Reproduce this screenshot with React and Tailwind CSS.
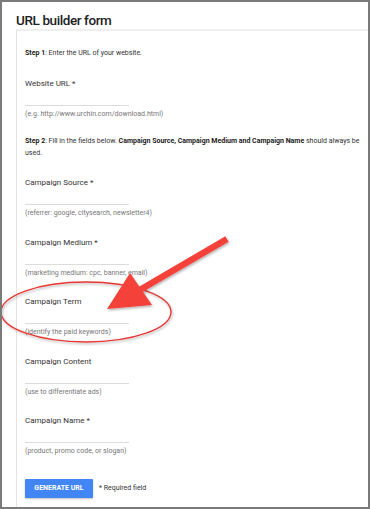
const fields = [
  { label: 'Campaign Source', required: true, hint: '(referrer: google, citysearch, newsletter4)' },
  { label: 'Campaign Medium', required: true, hint: '(marketing medium: cpc, banner, email)' },
  { label: 'Campaign Term', required: false, hint: '(identify the paid keywords)' },
  { label: 'Campaign Content', required: false, hint: '(use to differentiate ads)' },
  { label: 'Campaign Name', required: true, hint: '(product, promo code, or slogan)' },
]

function Field({ label, required, hint, last }) {
  return (
    <div className={last ? '' : 'mb-[18.5px]'}>
      <div className="text-[8px] leading-[12px] text-[#333]">
        {label}
        {required && ' *'}
      </div>
      <div className="w-[104px] h-[16px] border-b border-[#dcdcdc]" />
      <div className="mt-[3px] text-[7px] leading-[10px] text-[#777]">{hint}</div>
    </div>
  )
}

export default function App() {
  return (
    <div
      className="relative w-[370px] h-[509px] overflow-hidden bg-white border-2 border-[#7a7a7a] flex flex-col"
      style={{ fontFamily: 'Roboto, "Noto Sans", sans-serif' }}
    >
      {/* Title */}
      <h1 className="pl-[14px] pt-[10px] text-[13.5px] leading-[16px] tracking-[-0.4px] text-[#222] font-medium">
        URL builder form
      </h1>

      {/* Form card */}
      <div className="ml-[14px] mt-[1px] flex-1 border-t-2 border-l border-t-[#efefef] border-l-[#e4e4e4] pl-2 pt-[17px]">
        <p className="text-[7px] leading-[10px] text-[#333]">
          <span className="font-bold text-[#222]">Step 1</span>: Enter the URL of your website.
        </p>

        <div className="mt-[20px]">
          <div className="text-[8px] leading-[12px] text-[#333]">Website URL *</div>
          <div className="w-[104px] h-[16px] border-b border-[#dcdcdc]" />
          <div className="mt-[3px] text-[7px] leading-[10px] text-[#777]">(e.g. http://www.urchin.com/download.html)</div>
        </div>

        <p className="mt-[16px] text-[7px] leading-[12px] text-[#333] whitespace-nowrap">
          <span className="font-bold text-[#222]">Step 2</span>: Fill in the fields below.{' '}
          <span className="font-bold text-[#222]">Campaign Source, Campaign Medium and Campaign Name</span> should always be
          <br />
          used.
        </p>

        <div className="mt-[18px]">
          {fields.map((f, i) => (
            <Field key={f.label} {...f} last={i === fields.length - 1} />
          ))}
        </div>

        <div className="mt-[23px] flex items-center gap-[6px]">
          <button className="w-[68px] h-[19px] rounded-[1px] bg-[#4285f4] text-white text-[7px] font-bold shadow-[0_1px_2px_rgba(0,0,0,0.25)]">
            GENERATE URL
          </button>
          <span className="text-[7px] text-[#333]">* Required field</span>
        </div>
      </div>

      {/* Annotation: arrow and ellipse */}
      <svg className="absolute left-[-2px] top-[-2px] pointer-events-none" width="370" height="509" viewBox="0 0 370 509">
        <defs>
          <filter id="sh" x="-20%" y="-20%" width="140%" height="140%">
            <feDropShadow dx="1" dy="1.5" stdDeviation="1.2" floodColor="#000" floodOpacity="0.3" />
          </filter>
        </defs>
        <ellipse cx="86" cy="312" rx="85" ry="30" fill="none" stroke="#e53935" strokeWidth="1.4" filter="url(#sh)" />
        <g filter="url(#sh)" fill="#f4433b">
          <line x1="227" y1="239" x2="138" y2="291" stroke="#f4433b" strokeWidth="6.5" />
          <polygon points="107,309 130,273 152,305" />
        </g>
      </svg>
    </div>
  )
}
